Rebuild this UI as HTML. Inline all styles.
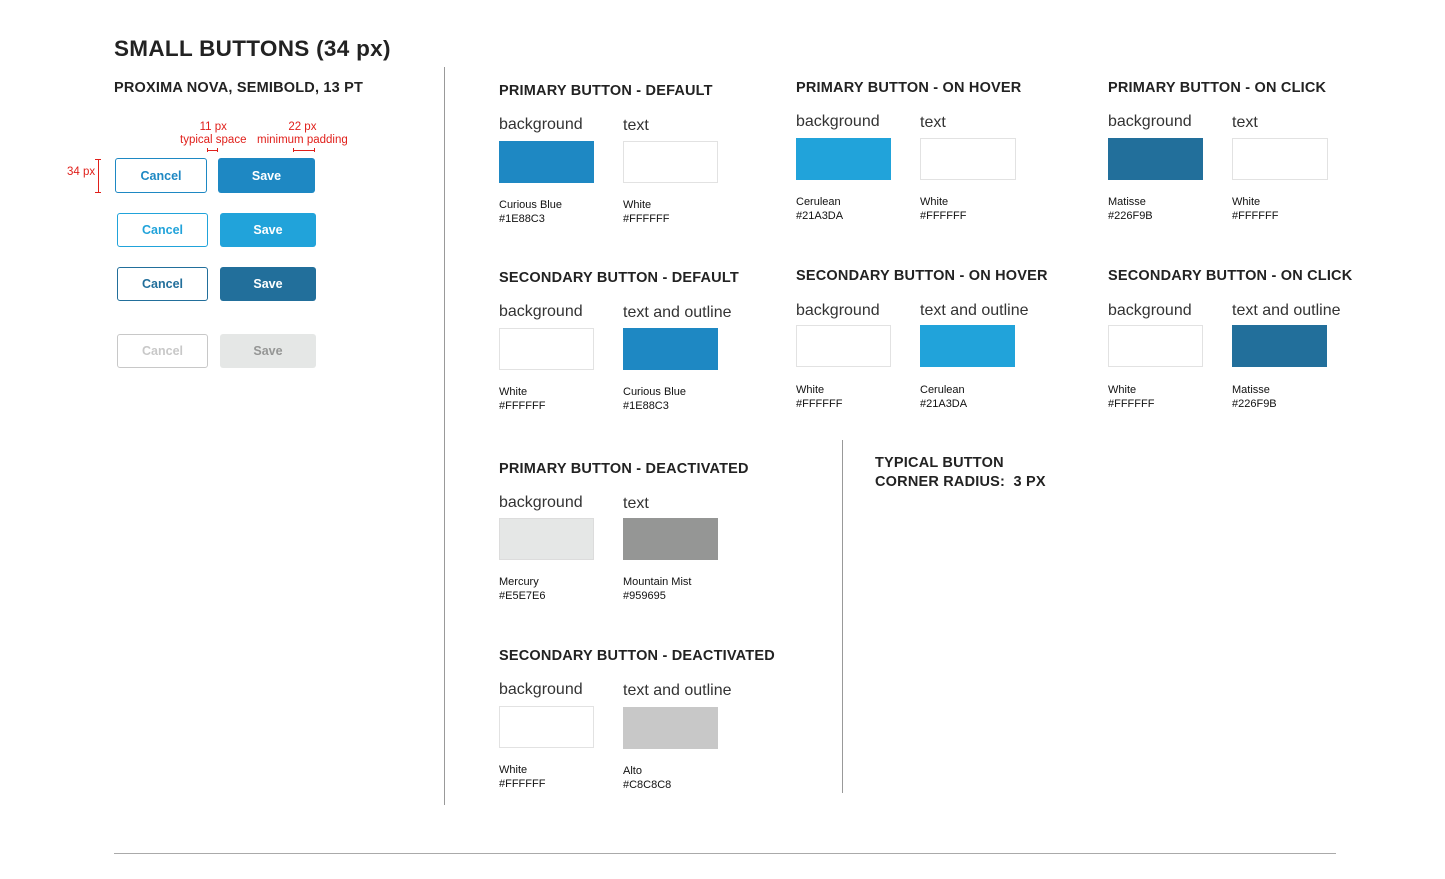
<!DOCTYPE html>
<html><head><meta charset="utf-8"><style>
body{margin:0;width:1445px;height:879px;background:#fff;position:relative;overflow:hidden;font-family:"Liberation Sans",sans-serif;color:#222}
.a{position:absolute;white-space:nowrap}
.t{font-size:14.5px;font-weight:bold;letter-spacing:0.2px;line-height:18px;color:#222}
.l{font-size:16px;line-height:18px;color:#333}
.c{font-size:11px;line-height:14px;color:#111}
.sw{position:absolute;width:95px;height:42px;box-sizing:border-box}
.w{border:1px solid #e2e2e2;background:#fff}
.b{position:absolute;box-sizing:border-box;border-radius:3px;font-size:12.5px;font-weight:bold;display:flex;align-items:center;justify-content:center}
.red{color:#e0201b;font-size:11.5px;line-height:13px;text-align:center}
</style></head><body>
<div class="a" style="left:114px;top:36px;font-size:22.5px;font-weight:bold;letter-spacing:0.3px;color:#222">SMALL BUTTONS (34 px)</div>
<div class="a t" style="left:114px;top:79px">PROXIMA NOVA, SEMIBOLD, 13 PT</div>

<div class="a red" style="left:180px;top:121px">11 px<br>typical space</div>
<div class="a red" style="left:257px;top:121px">22 px<br>minimum padding</div>
<div class="a" style="left:207px;top:148px;width:11px;height:4px;border-left:1px solid #e0201b;border-right:1px solid #e0201b;box-sizing:border-box"><div style="margin-top:1.5px;border-top:1px solid #e0201b"></div></div>
<div class="a" style="left:293px;top:148px;width:22px;height:4px;border-left:1px solid #e0201b;border-right:1px solid #e0201b;box-sizing:border-box"><div style="margin-top:1.5px;border-top:1px solid #e0201b"></div></div>
<div class="a red" style="left:67px;top:166px">34 px</div>
<div class="a" style="left:95px;top:159px;width:6px;height:34px;border-top:1px solid #e0201b;border-bottom:1px solid #e0201b;box-sizing:border-box"><div style="margin-left:2.5px;width:1px;height:32px;background:#e0201b"></div></div>

<div class="b" style="left:115px;top:158px;width:92px;height:35px;border:1.5px solid #1E88C3;color:#1E88C3">Cancel</div>
<div class="b" style="left:218px;top:158px;width:97px;height:35px;background:#1E88C3;color:#fff">Save</div>
<div class="b" style="left:117px;top:213px;width:91px;height:34px;border:1.5px solid #21A3DA;color:#21A3DA">Cancel</div>
<div class="b" style="left:220px;top:213px;width:96px;height:34px;background:#21A3DA;color:#fff">Save</div>
<div class="b" style="left:117px;top:267px;width:91px;height:34px;border:1.5px solid #226F9B;color:#226F9B">Cancel</div>
<div class="b" style="left:220px;top:267px;width:96px;height:34px;background:#226F9B;color:#fff">Save</div>
<div class="b" style="left:117px;top:334px;width:91px;height:34px;border:1.5px solid #C8C8C8;color:#C8C8C8">Cancel</div>
<div class="b" style="left:220px;top:334px;width:96px;height:34px;background:#E5E7E6;color:#959695">Save</div>

<div class="a" style="left:444px;top:67px;width:1px;height:738px;background:#999"></div>
<div class="a" style="left:842px;top:440px;width:1px;height:353px;background:#999"></div>
<div class="a" style="left:114px;top:853px;width:1222px;height:1px;background:#aaa"></div>

<div class="a t" style="left:499px;top:82px">PRIMARY BUTTON - DEFAULT</div>
<div class="a l" style="left:499px;top:116px">background</div><div class="a l" style="left:623px;top:117px">text</div>
<div class="sw" style="left:499px;top:141px;background:#1E88C3"></div><div class="sw w" style="left:623px;top:141px"></div>
<div class="a c" style="left:499px;top:198px">Curious Blue<br>#1E88C3</div><div class="a c" style="left:623px;top:198px">White<br>#FFFFFF</div>

<div class="a t" style="left:796px;top:79px">PRIMARY BUTTON - ON HOVER</div>
<div class="a l" style="left:796px;top:113px">background</div><div class="a l" style="left:920px;top:114px">text</div>
<div class="sw" style="left:796px;top:138px;background:#21A3DA"></div><div class="sw w" style="left:920px;top:138px;width:96px"></div>
<div class="a c" style="left:796px;top:195px">Cerulean<br>#21A3DA</div><div class="a c" style="left:920px;top:195px">White<br>#FFFFFF</div>

<div class="a t" style="left:1108px;top:79px">PRIMARY BUTTON - ON CLICK</div>
<div class="a l" style="left:1108px;top:113px">background</div><div class="a l" style="left:1232px;top:114px">text</div>
<div class="sw" style="left:1108px;top:138px;background:#226F9B"></div><div class="sw w" style="left:1232px;top:138px;width:96px"></div>
<div class="a c" style="left:1108px;top:195px">Matisse<br>#226F9B</div><div class="a c" style="left:1232px;top:195px">White<br>#FFFFFF</div>

<div class="a t" style="left:499px;top:269px">SECONDARY BUTTON - DEFAULT</div>
<div class="a l" style="left:499px;top:303px">background</div><div class="a l" style="left:623px;top:304px">text and outline</div>
<div class="sw w" style="left:499px;top:328px"></div><div class="sw" style="left:623px;top:328px;background:#1E88C3"></div>
<div class="a c" style="left:499px;top:385px">White<br>#FFFFFF</div><div class="a c" style="left:623px;top:385px">Curious Blue<br>#1E88C3</div>

<div class="a t" style="left:796px;top:267px">SECONDARY BUTTON - ON HOVER</div>
<div class="a l" style="left:796px;top:302px">background</div><div class="a l" style="left:920px;top:302px">text and outline</div>
<div class="sw w" style="left:796px;top:325px"></div><div class="sw" style="left:920px;top:325px;background:#21A3DA"></div>
<div class="a c" style="left:796px;top:383px">White<br>#FFFFFF</div><div class="a c" style="left:920px;top:383px">Cerulean<br>#21A3DA</div>

<div class="a t" style="left:1108px;top:267px">SECONDARY BUTTON - ON CLICK</div>
<div class="a l" style="left:1108px;top:302px">background</div><div class="a l" style="left:1232px;top:302px">text and outline</div>
<div class="sw w" style="left:1108px;top:325px"></div><div class="sw" style="left:1232px;top:325px;background:#226F9B"></div>
<div class="a c" style="left:1108px;top:383px">White<br>#FFFFFF</div><div class="a c" style="left:1232px;top:383px">Matisse<br>#226F9B</div>

<div class="a t" style="left:499px;top:460px">PRIMARY BUTTON - DEACTIVATED</div>
<div class="a l" style="left:499px;top:494px">background</div><div class="a l" style="left:623px;top:495px">text</div>
<div class="sw" style="left:499px;top:518px;background:#E5E7E6;border:1px solid #dcdcdc"></div><div class="sw" style="left:623px;top:518px;background:#959695"></div>
<div class="a c" style="left:499px;top:575px">Mercury<br>#E5E7E6</div><div class="a c" style="left:623px;top:575px">Mountain Mist<br>#959695</div>

<div class="a t" style="left:499px;top:647px">SECONDARY BUTTON - DEACTIVATED</div>
<div class="a l" style="left:499px;top:681px">background</div><div class="a l" style="left:623px;top:682px">text and outline</div>
<div class="sw w" style="left:499px;top:706px"></div><div class="sw" style="left:623px;top:707px;background:#C8C8C8"></div>
<div class="a c" style="left:499px;top:763px">White<br>#FFFFFF</div><div class="a c" style="left:623px;top:764px">Alto<br>#C8C8C8</div>

<div class="a t" style="left:875px;top:454px;line-height:19px">TYPICAL BUTTON<br>CORNER RADIUS:&nbsp; 3 PX</div>
</body></html>
